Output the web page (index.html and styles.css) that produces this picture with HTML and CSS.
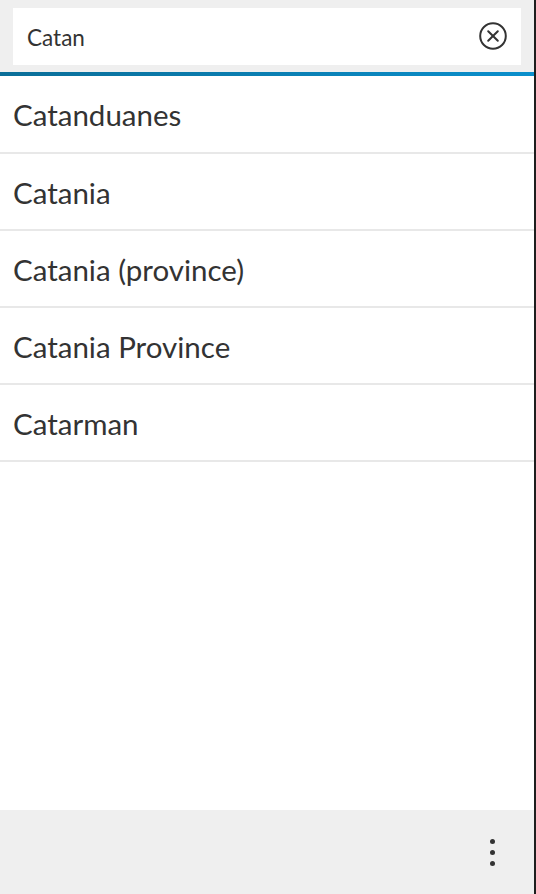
FILE: index.html
```html
<!DOCTYPE html>
<html>
<head>
<meta charset="utf-8">
<link rel="stylesheet" href="styles.css">
</head>
<body>
<div class="screen">
  <header class="header">
    <div class="search">
      <span class="query">Catan</span>
      <svg class="clear" width="30" height="30" viewBox="0 0 30 30">
        <circle cx="15" cy="15" r="12.8" fill="none" stroke="#333" stroke-width="2"/>
        <path d="M10.2 10.2 L19.8 19.8 M19.8 10.2 L10.2 19.8" stroke="#333" stroke-width="2" stroke-linecap="round"/>
      </svg>
    </div>
  </header>
  <div class="accent"></div>
  <ul class="results">
    <li class="row">Catanduanes</li>
    <li class="row">Catania</li>
    <li class="row">Catania (province)</li>
    <li class="row">Catania Province</li>
    <li class="row">Catarman</li>
  </ul>
  <footer class="actionbar">
    <div class="overflow">
      <span class="dot"></span><span class="dot"></span><span class="dot"></span>
    </div>
  </footer>
</div>
</body>
</html>
```
FILE: styles.css
```css
html, body {
  margin: 0;
  padding: 0;
  background: #fff;
}
.screen {
  width: 534px;
  height: 894px;
  border-right: 2px solid #1e1e1e;
  display: flex;
  flex-direction: column;
  font-family: "Lato", "Open Sans", sans-serif;
  color: #333;
}
.header {
  background: #efefef;
  padding: 8px 13px 7px 13px;
}
.search {
  height: 57px;
  background: #fff;
  display: flex;
  align-items: center;
  justify-content: space-between;
  padding: 0 13px 0 14px;
}
.query {
  font-size: 22.5px;
  color: #333;
  margin-top: 2px;
}
.clear {
  display: block;
  margin-top: -1px;
}
.accent {
  height: 4px;
  background: linear-gradient(to right, #0a6e98, #0a8fcc);
}
.results {
  list-style: none;
  margin: 0;
  padding: 0;
  flex: 1;
}
.row {
  box-sizing: border-box;
  height: 77px;
  border-bottom: 2px solid #e8e8e8;
  display: flex;
  align-items: center;
  padding-left: 13px;
  padding-top: 1px;
  font-size: 29.5px;
  color: #333;
}
.row:first-child {
  height: 78px;
}
.actionbar {
  height: 84px;
  background: #efefef;
  display: flex;
  justify-content: flex-end;
  align-items: center;
}
.overflow {
  width: 10px;
  margin-right: 37px;
  display: flex;
  flex-direction: column;
  align-items: center;
  gap: 6px;
}
.dot {
  width: 5px;
  height: 5px;
  border-radius: 50%;
  background: #333;
}
```
